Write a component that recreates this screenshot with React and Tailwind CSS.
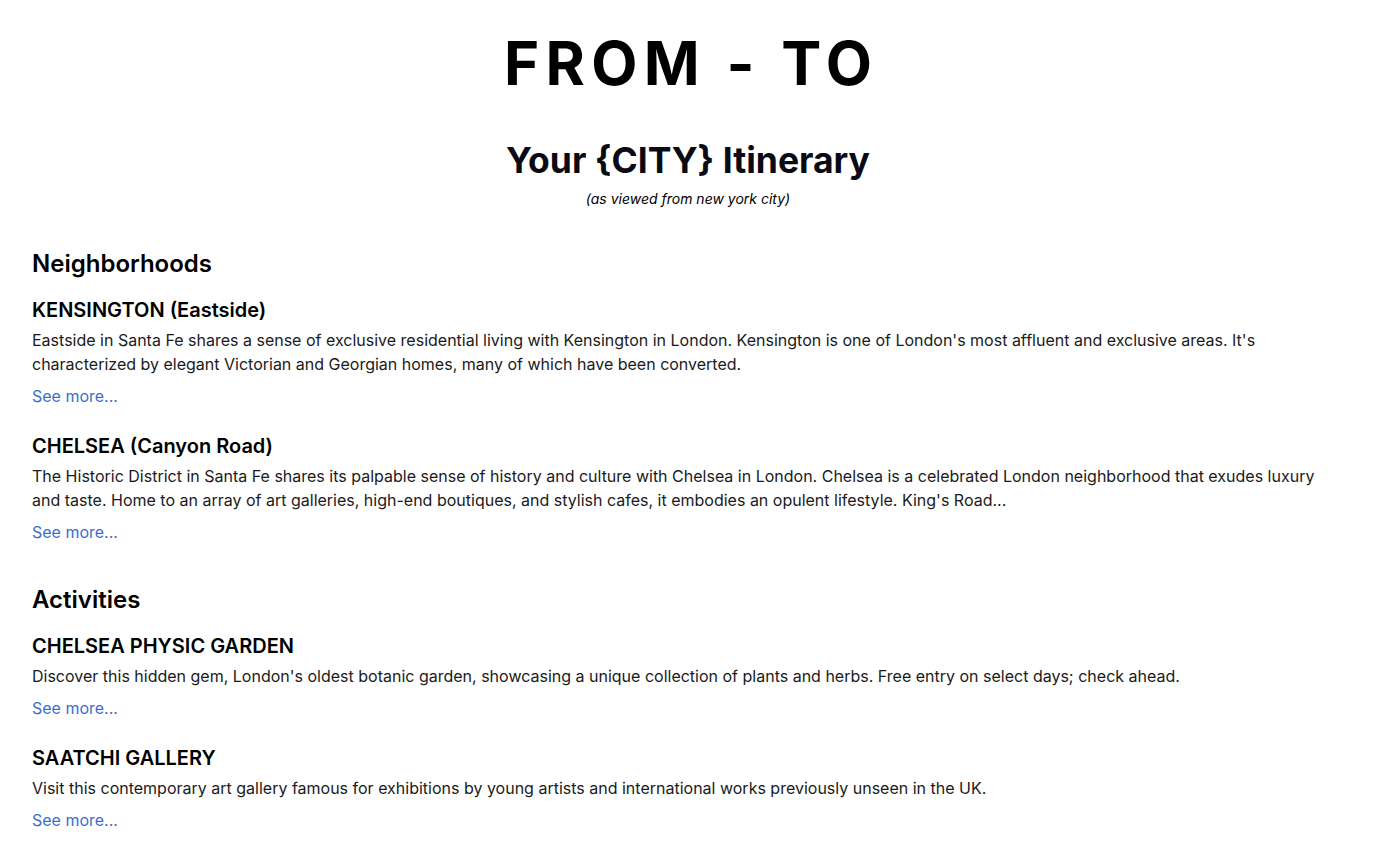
import React from 'react';

const sections = [
  {
    title: 'Neighborhoods',
    items: [
      {
        name: 'KENSINGTON (Eastside)',
        text: "Eastside in Santa Fe shares a sense of exclusive residential living with Kensington in London. Kensington is one of London's most affluent and exclusive areas. It's characterized by elegant Victorian and Georgian homes, many of which have been converted.",
      },
      {
        name: 'CHELSEA (Canyon Road)',
        text: "The Historic District in Santa Fe shares its palpable sense of history and culture with Chelsea in London. Chelsea is a celebrated London neighborhood that exudes luxury and taste. Home to an array of art galleries, high-end boutiques, and stylish cafes, it embodies an opulent lifestyle. King's Road...",
      },
    ],
  },
  {
    title: 'Activities',
    items: [
      {
        name: 'CHELSEA PHYSIC GARDEN',
        text: "Discover this hidden gem, London's oldest botanic garden, showcasing a unique collection of plants and herbs. Free entry on select days; check ahead.",
      },
      {
        name: 'SAATCHI GALLERY',
        text: 'Visit this contemporary art gallery famous for exhibitions by young artists and international works previously unseen in the UK.',
      },
    ],
  },
];

export default function App() {
  return (
    <div className="min-h-screen bg-white text-black font-['Inter',sans-serif] px-8 pt-[33px] pb-10">
      <h1 className="text-center text-[60px] leading-none font-bold tracking-[0.105em] pl-[0.105em]">FROM - TO</h1>

      <div className="mt-[48px] text-center">
        <h2 className="text-[35.5px] leading-10 font-bold text-[#0a0a14]">Your {'{CITY}'} Itinerary</h2>
        <p className="mt-2 text-sm leading-5 italic">(as viewed from new york city)</p>
      </div>

      <div className="mt-[39px] flex flex-col gap-[40px]">
        {sections.map(section => (
          <section key={section.title}>
            <h3 className="text-2xl leading-8 font-semibold">{section.title}</h3>
            <div className="mt-4 flex flex-col gap-[24px]">
              {section.items.map(item => (
                <div key={item.name}>
                  <h4 className="text-xl leading-7 font-semibold">{item.name}</h4>
                  <p className="mt-[4px] text-base leading-6 text-[#1a1a1a]">{item.text}</p>
                  <a href="#" className="mt-2 block text-base leading-6 text-[#3b6fcb]">See more...</a>
                </div>
              ))}
            </div>
          </section>
        ))}
      </div>
    </div>
  );
}
